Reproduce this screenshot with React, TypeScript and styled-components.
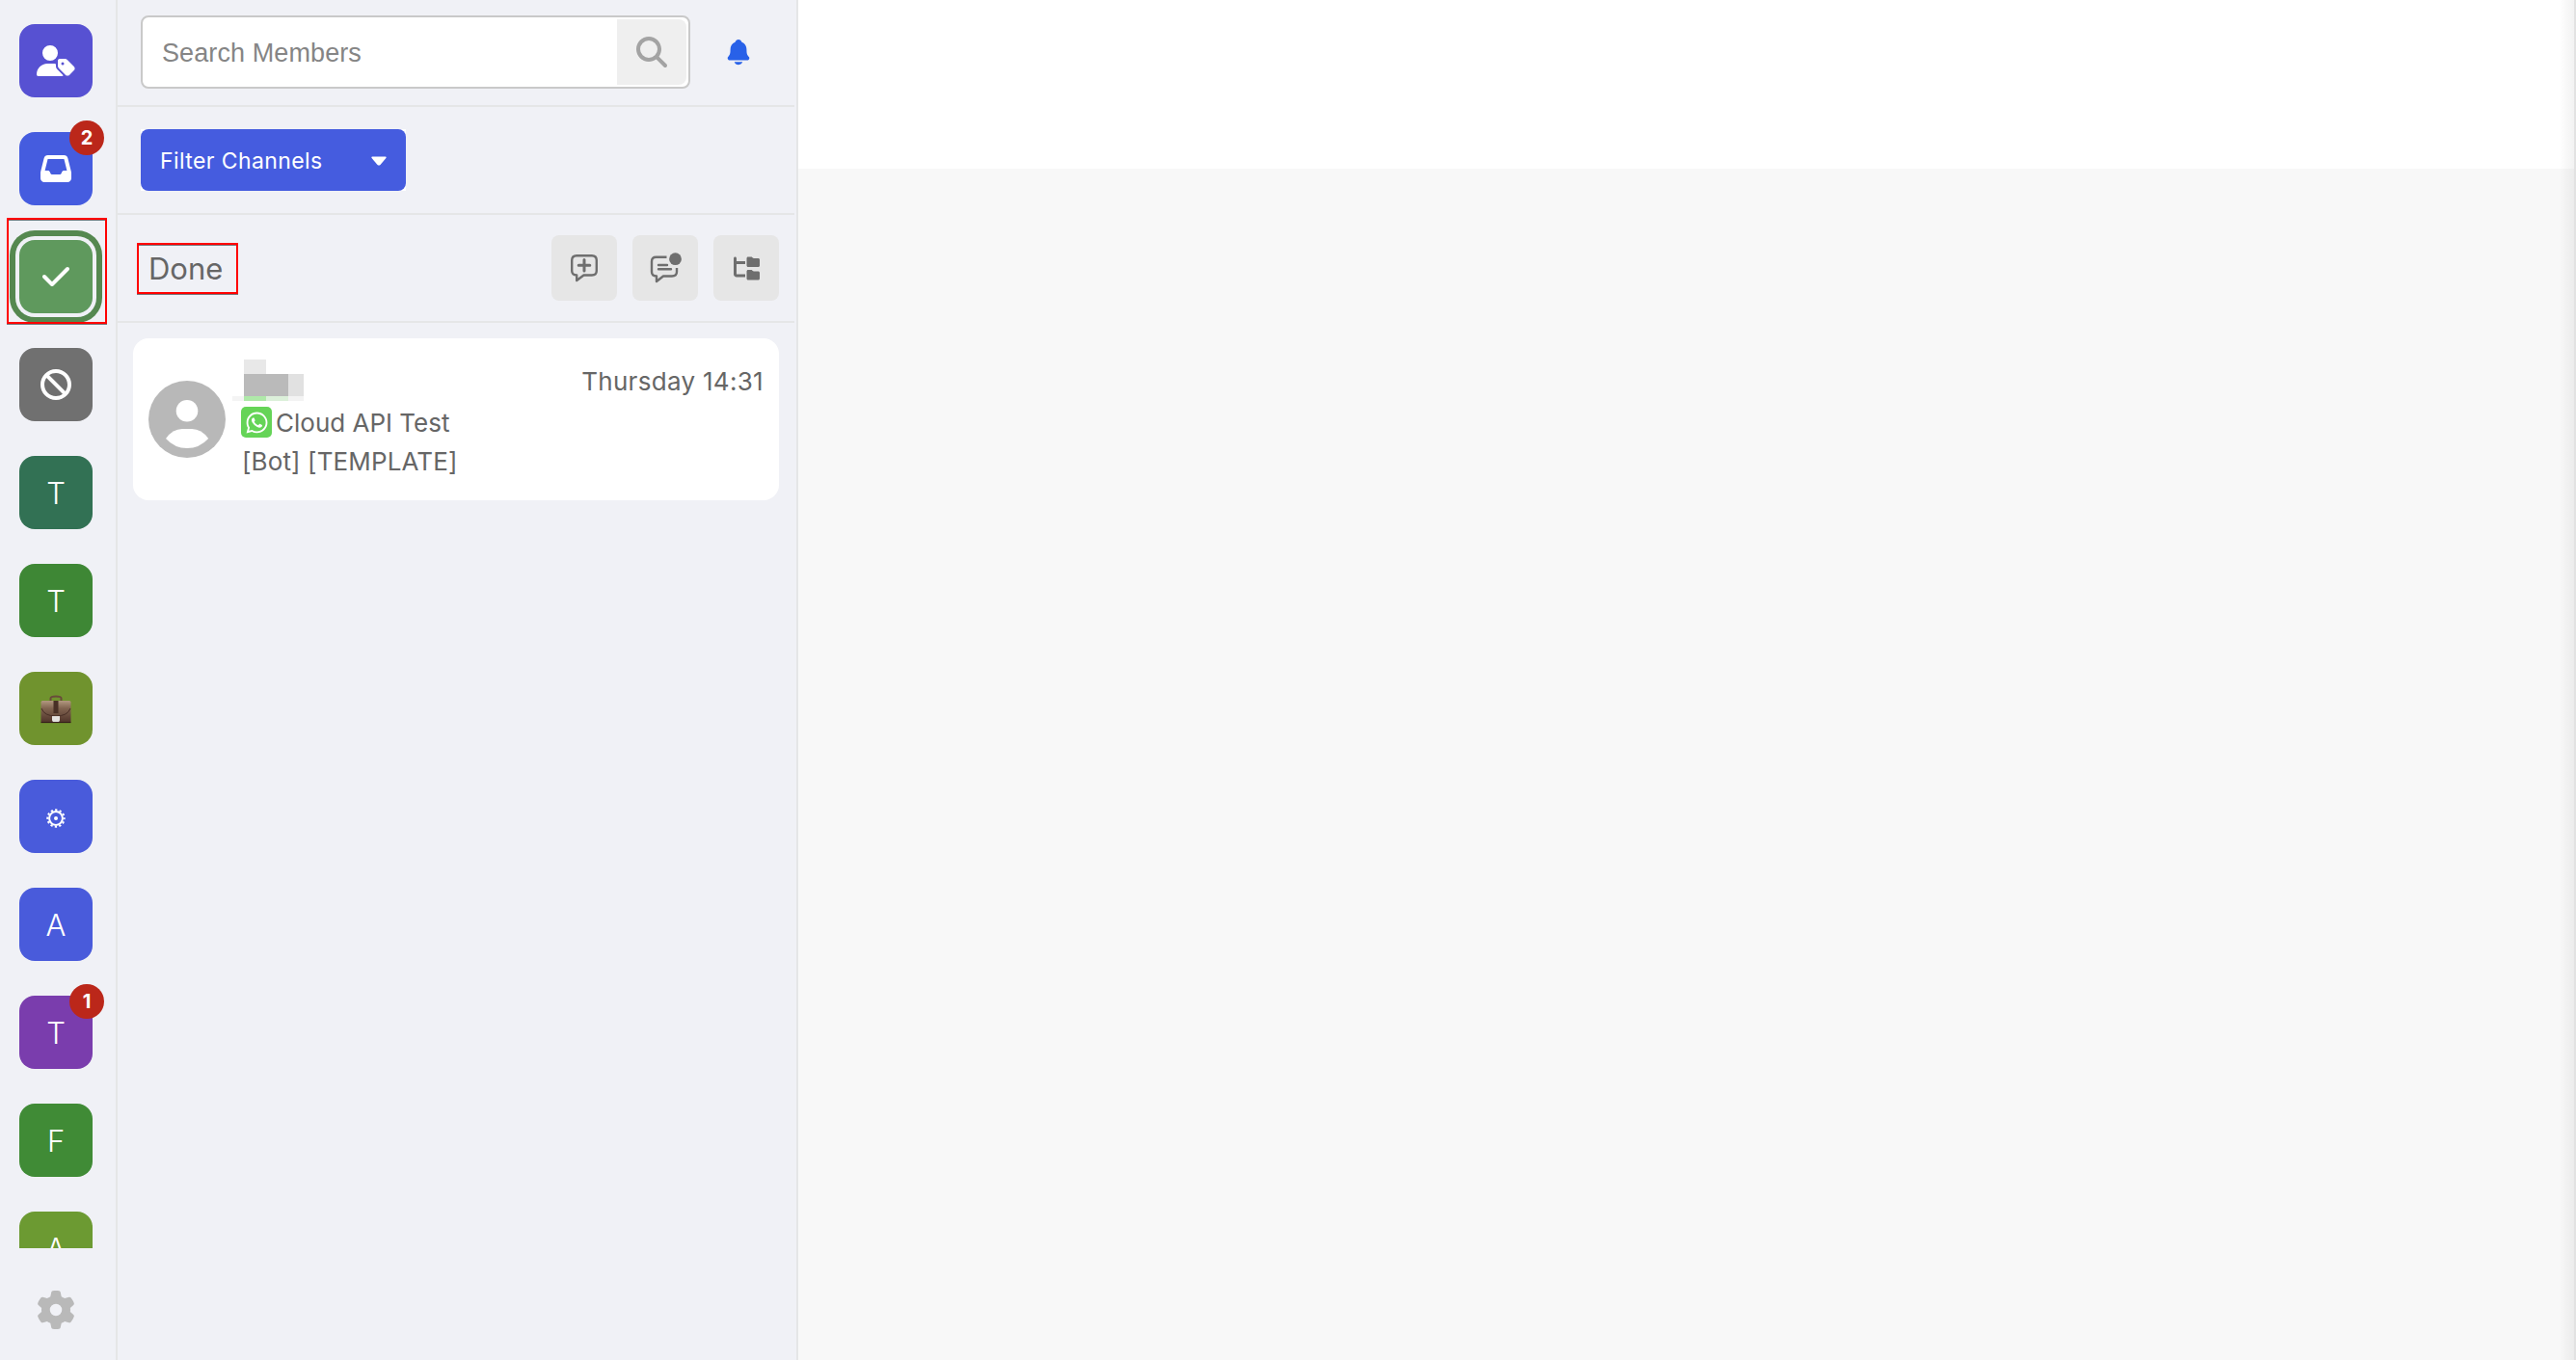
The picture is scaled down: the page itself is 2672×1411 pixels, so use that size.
import { ReactNode } from "react";
import styled, { createGlobalStyle } from "styled-components";
import {
  FaUserTag,
  FaInbox,
  FaCheck,
  FaBan,
  FaGear,
  FaMagnifyingGlass,
  FaFolderTree,
  FaWhatsapp,
} from "react-icons/fa6";
import { IoNotifications } from "react-icons/io5";

type Channel = {
  id: number;
  color: string;
  content: ReactNode;
  badge?: number;
  active?: boolean;
};

const channels: Channel[] = [
  { id: 1, color: "#5751d2", content: <FaUserTag size={40} /> },
  { id: 2, color: "#455cdf", content: <FaInbox size={32} />, badge: 2 },
  { id: 3, color: "#5f995d", content: <FaCheck size={32} />, active: true },
  { id: 4, color: "#707070", content: <FaBan size={32} /> },
  { id: 5, color: "#327154", content: <Letter>T</Letter> },
  { id: 6, color: "#3e8735", content: <Letter>T</Letter> },
  { id: 7, color: "#70932e", content: <Briefcase /> },
  { id: 8, color: "#495bdb", content: <Cog /> },
  { id: 9, color: "#495bdb", content: <Letter>A</Letter> },
  { id: 10, color: "#7a3dad", content: <Letter>T</Letter>, badge: 1 },
  { id: 11, color: "#408b36", content: <Letter>F</Letter> },
  { id: 12, color: "#6c9a32", content: <Letter>A</Letter> },
];

export default function App() {
  return (
    <Page>
      <GlobalStyle />
      <Rail>
        <ChannelList>
          {channels.map((channel) => (
            <Tile key={channel.id} $color={channel.color} $active={channel.active}>
              {channel.content}
              {channel.badge && <Badge>{channel.badge}</Badge>}
              {channel.active && <TileMark />}
            </Tile>
          ))}
        </ChannelList>
        <Settings>
          <FaGear size={40} />
        </Settings>
      </Rail>

      <Sidebar>
        <SearchRow>
          <SearchBox>
            <SearchInput placeholder="Search Members" />
            <SearchButton>
              <FaMagnifyingGlass size={32} />
            </SearchButton>
          </SearchBox>
          <IoNotifications size={30} color="#2861e8" />
        </SearchRow>

        <FilterRow>
          <FilterWrapper>
            <FilterButton>
              Filter Channels
              <Caret />
            </FilterButton>
          </FilterWrapper>
        </FilterRow>

        <TitleRow>
          <Title>Done</Title>
          <Actions>
            <Action>
              <ChatPlus />
            </Action>
            <Action>
              <ChatUnread />
            </Action>
            <Action>
              <FaFolderTree size={27} />
            </Action>
          </Actions>
        </TitleRow>

        <Conversation>
          <Avatar />
          <Details>
            <TopLine>
              <HiddenName />
              <Time>Thursday 14:31</Time>
            </TopLine>
            <Source>
              <WhatsappIcon>
                <FaWhatsapp size={25} />
              </WhatsappIcon>
              <SourceName>Cloud API Test</SourceName>
            </Source>
            <Message>[Bot] [TEMPLATE]</Message>
          </Details>
        </Conversation>
      </Sidebar>

      <Main>
        <MainHeader />
        <EdgeShadow />
      </Main>
    </Page>
  );
}

function Letter({ children }: { children: string }) {
  return <LetterText>{children}</LetterText>;
}

function Briefcase() {
  return (
    <svg width="32" height="32" viewBox="0 -2 32 32">
      <defs>
        <linearGradient id="leather" x1="0" y1="0" x2="0" y2="1">
          <stop offset="0" stopColor="#b29880" />
          <stop offset="0.35" stopColor="#80634f" />
          <stop offset="1" stopColor="#4e3229" />
        </linearGradient>
      </defs>
      <path d="M10.5 6V3.4Q10.5 1.5 16 1.5T21.5 3.4V6" fill="none" stroke="#694c3a" strokeWidth="2" />
      <rect x="0.5" y="6" width="31" height="23" rx="1.5" fill="url(#leather)" />
      <path d="M1 14Q4 22 16 22T31 14" fill="none" stroke="#472e25" strokeWidth="1" />
      <rect x="13.5" y="6" width="5" height="13" fill="#493026" />
      <path d="M12 22h8v3.500q0 3-3 3h-2q-3 0-3-3z" fill="#e4e2e0" />
      <path d="M0.5 28.5h31" stroke="#38231c" strokeWidth="1.2" />
    </svg>
  );
}

function Cog() {
  return (
    <svg width="20" height="24" viewBox="0 -4 20 24" fill="none" stroke="#fff">
      <circle cx="10" cy="10" r="6.9" strokeWidth="2" />
      <circle cx="10" cy="10" r="8.7" strokeWidth="2" strokeDasharray="2.3 2.255" strokeDashoffset="1.15" />
      <circle cx="10" cy="10" r="2" fill="#fff" stroke="none" />
    </svg>
  );
}

function Caret() {
  return (
    <svg width="16" height="10" viewBox="0 0 16 10">
      <path d="M1.2 0.5h13.6q1.4.3.6 1.6L9.5 9Q8 10.200 6.500 9L.6 2.100Q-.2.8 1.200.5z" fill="#fff" />
    </svg>
  );
}

function ChatPlus() {
  return (
    <svg width="28" height="30" viewBox="0 -1 28 30" fill="none" stroke="#6e6e6e">
      <path d="M6 1.200h16Q26.800 1.200 26.800 6v11Q26.800 21.500 22 21.500H13.500L6.200 27v-5.500Q1.200 21.500 1.200 17V6Q1.200 1.200 6 1.200z" strokeWidth="2.400" strokeLinejoin="round" />
      <path d="M14 5.500v11.500M8.200 11.300h11.600" strokeWidth="3" strokeLinecap="round" />
    </svg>
  );
}

function ChatUnread() {
  return (
    <svg width="34" height="34" viewBox="0 0 34 34" fill="none" stroke="#6e6e6e">
      <path d="M18.500 5.700H7.500Q3 5.700 3 10.200v10.800Q3 25.500 8 25.500V31l7-5.500h9q5 0 5-4.500v-4" strokeWidth="2.400" strokeLinejoin="round" />
      <path d="M10 14h9M10 18.200h13" strokeWidth="2.400" strokeLinecap="round" />
      <circle cx="27.500" cy="7.700" r="6.400" fill="#6e6e6e" stroke="none" />
    </svg>
  );
}

function Avatar() {
  return (
    <svg width="80" height="80" viewBox="0 0 80 80">
      <circle cx="40" cy="40" r="40" fill="#b8b8b8" />
      <circle cx="40" cy="31.300" r="11.300" fill="#fff" />
      <path d="M18 60Q25 50 35 50h10q10 0 17.200 10Q53 70 40 70T18 60z" fill="#fff" />
    </svg>
  );
}

function HiddenName() {
  return (
    <Mosaic width="74" height="43" viewBox="0 0 74 43">
      <rect x="12" y="0" width="23" height="15" fill="#e8e8e8" />
      <rect x="12" y="15" width="46" height="23" fill="#bababa" />
      <rect x="58" y="15" width="16" height="23" fill="#e1e1e1" />
      <rect x="0" y="38" width="12" height="5" fill="#f4f4f4" />
      <rect x="12" y="38" width="23" height="5" fill="#afe9a9" />
      <rect x="35" y="38" width="23" height="5" fill="#dcf0da" />
      <rect x="58" y="38" width="16" height="5" fill="#f3f3f3" />
    </Mosaic>
  );
}

const GlobalStyle = createGlobalStyle`
  * {
    box-sizing: border-box;
  }

  body {
    margin: 0;
    overflow: hidden;
  }

  svg {
    display: block;
    flex-shrink: 0;
  }
`;

const Page = styled.div`
  width: 100vw;
  height: 100vh;
  display: flex;
  font-family: Inter, "Liberation Sans", sans-serif;
  color: #666666;
  background-color: #f0f1f6;
`;

const Rail = styled.nav`
  width: 122px;
  display: flex;
  flex-direction: column;
  border-right: 2px solid #e5e6e7;
`;

const ChannelList = styled.div`
  height: 1295px;
  padding: 25px 0 0 20px;
  display: flex;
  flex-direction: column;
  gap: 36px;
  overflow: hidden;
`;

const Tile = styled.div<{ $color: string; $active?: boolean }>`
  position: relative;
  width: 76px;
  height: 76px;
  flex-shrink: 0;
  display: flex;
  align-items: center;
  justify-content: center;
  border-radius: 16px;
  color: #ffffff;
  background-color: ${({ $color }) => $color};
  box-shadow: ${({ $active }) => ($active ? "0 0 0 4px #f0f1f6, 0 0 0 10px #558850" : "none")};
`;

const LetterText = styled.span`
  padding-top: 2px;
  font-size: 31px;
  font-weight: 300;
  line-height: 38px;
`;

const Badge = styled.span`
  position: absolute;
  top: -12px;
  right: -12px;
  width: 36px;
  height: 36px;
  display: flex;
  align-items: center;
  justify-content: center;
  border-radius: 50%;
  font-size: 20px;
  font-weight: 700;
  background-color: #bb271a;
`;

const TileMark = styled.span`
  position: absolute;
  top: -23px;
  left: -13px;
  width: 104px;
  height: 110px;
  border: 2px solid #ff0000;
  box-shadow: 0 1px 0 #77777d, inset 0 1px 0 #77777d;
`;

const Settings = styled.div`
  padding: 44px 0 0 38px;
  color: #b9b9b9;
`;

const Sidebar = styled.aside`
  width: 706px;
  padding-right: 2px;
  display: flex;
  flex-direction: column;
  border-right: 2px solid #e5e6e7;
`;

const Row = styled.div`
  height: 112px;
  display: flex;
  align-items: center;
  border-bottom: 2px solid #e5e6e7;
`;

const SearchRow = styled(Row)`
  height: 111px;
  padding: 0 0 1px 24px;
  gap: 35px;
`;

const SearchBox = styled.div`
  width: 570px;
  height: 76px;
  padding: 2px;
  display: flex;
  border: 2px solid #c9c9c9;
  border-radius: 8px;
  background-color: #ffffff;
`;

const SearchInput = styled.input`
  flex: 1;
  min-width: 0;
  padding: 2px 0 0 18px;
  border: none;
  outline: none;
  background: transparent;
  font-family: "Liberation Sans", sans-serif;
  font-size: 27px;
  letter-spacing: 0.1px;

  &::placeholder {
    color: #858585;
  }
`;

const SearchButton = styled.button`
  width: 72px;
  height: 68px;
  padding: 0;
  display: flex;
  align-items: center;
  justify-content: center;
  border: none;
  border-radius: 0 8px 8px 0;
  color: #a3a3a3;
  background-color: #efefef;
`;

const FilterRow = styled(Row)`
  padding-left: 24px;
`;

const FilterWrapper = styled.div`
  background-color: #ffffff;
`;

const FilterButton = styled.button`
  width: 275px;
  height: 64px;
  padding: 2px 20px 0;
  display: flex;
  align-items: center;
  justify-content: space-between;
  border: none;
  border-radius: 8px;
  font-family: inherit;
  font-size: 23px;
  letter-spacing: 0.4px;
  color: #ffffff;
  background-color: #455cdf;
`;

const TitleRow = styled(Row)`
  padding: 0 16px 0 20px;
  justify-content: space-between;
`;

const Title = styled.h1`
  width: 105px;
  height: 53px;
  margin: 0;
  padding-left: 10px;
  border: 2px solid #ff0000;
  box-shadow: 0 1px 0 #77777d, inset 0 1px 0 #77777d;
  font-size: 31px;
  font-weight: 400;
  line-height: 50px;
`;

const Actions = styled.div`
  display: flex;
  gap: 16px;
`;

const Action = styled.button`
  width: 68px;
  height: 68px;
  padding: 0;
  display: flex;
  align-items: center;
  justify-content: center;
  border: none;
  border-radius: 8px;
  color: #6e6e6e;
  background-color: #e6e6e6;
`;

const Conversation = styled.div`
  height: 168px;
  margin: 16px 16px 0;
  padding: 0 16px;
  display: flex;
  align-items: center;
  gap: 16px;
  border-radius: 16px;
  background-color: #ffffff;
`;

const Details = styled.div`
  flex: 1;
  height: 168px;
  padding-top: 22px;
`;

const TopLine = styled.div`
  height: 49px;
  display: flex;
  justify-content: space-between;
`;

const Mosaic = styled.svg`
  margin-left: -9px;
`;

const Time = styled.span`
  font-size: 26px;
  line-height: 46px;
  letter-spacing: 0.3px;
`;

const Source = styled.div`
  height: 32px;
  display: flex;
  align-items: center;
  gap: 4px;
`;

const WhatsappIcon = styled.span`
  width: 32px;
  height: 32px;
  display: flex;
  align-items: center;
  justify-content: center;
  border-radius: 5px;
  color: #ffffff;
  background-color: #65d457;
`;

const SourceName = styled.span`
  padding-top: 2px;
  font-size: 26px;
  line-height: 32px;
`;

const Message = styled.p`
  margin: 9px 0 0 1px;
  font-size: 26px;
  line-height: 32px;
  letter-spacing: 0.12px;
`;

const Main = styled.main`
  position: relative;
  flex: 1;
  background-color: #f8f8f8;
`;

const MainHeader = styled.header`
  height: 175px;
  background-color: #ffffff;
`;

const EdgeShadow = styled.div`
  position: absolute;
  top: 0;
  right: 0;
  width: 18px;
  height: 100%;
  border-right: 2px solid #e2e2e2;
  background: linear-gradient(to right, rgba(0, 0, 0, 0), rgba(0, 0, 0, 0.05));
`;
